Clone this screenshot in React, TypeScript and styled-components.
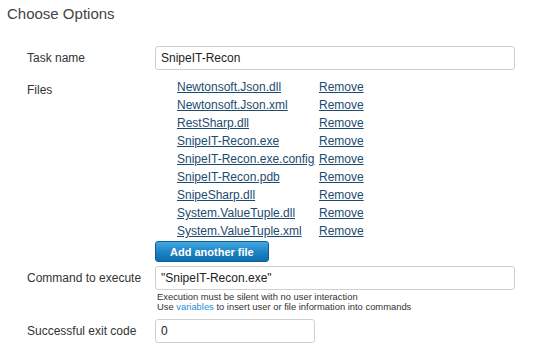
import {Fragment} from 'react';
import styled, {createGlobalStyle} from 'styled-components';

const GlobalStyle = createGlobalStyle`
  body {
    margin: 0;
    background: #fff;
    font-family: "Liberation Sans", Arial, sans-serif;
    color: #333;
  }
`;

const files = [
  'Newtonsoft.Json.dll',
  'Newtonsoft.Json.xml',
  'RestSharp.dll',
  'SnipeIT-Recon.exe',
  'SnipeIT-Recon.exe.config',
  'SnipeIT-Recon.pdb',
  'SnipeSharp.dll',
  'System.ValueTuple.dll',
  'System.ValueTuple.xml',
];

const Page = styled.div`
  width: 539px;
  height: 351px;
  padding: 4px 7px 0;
  box-sizing: border-box;
  overflow: hidden;
`;

const Title = styled.h2`
  margin: 0;
  font-size: 15px;
  font-weight: 400;
  line-height: 20px;
  color: #444;
`;

const Form = styled.div`
  margin: 22px 0 0 20px;
  display: flex;
  flex-direction: column;
`;

const Row = styled.div<{ gap?: number }>`
  display: grid;
  grid-template-columns: 128px 360px;
  margin-top: ${({ gap }) => gap ?? 0}px;
`;

const Label = styled.div<{ offset?: number }>`
  font-size: 12px;
  line-height: 24px;
  padding-top: ${({ offset }) => offset ?? 0}px;
  color: #333;
`;

const Field = styled.div`
  display: flex;
  flex-direction: column;
  align-items: flex-start;
`;

const Input = styled.input<{ narrow?: boolean }>`
  width: ${({ narrow }) => narrow ? '160px' : '360px'};
  height: 24px;
  box-sizing: border-box;
  border: 1px solid #d0d0d0;
  border-radius: 3px;
  padding: 0 5px;
  font-family: inherit;
  font-size: 12px;
  color: #222;
  outline: none;
`;

const FileList = styled.div`
  display: grid;
  grid-template-columns: 142px auto;
  margin-left: 22px;
`;

const FileLink = styled.a`
  font-size: 12px;
  line-height: 18px;
  color: #1d4b70;
  text-decoration: underline;
  white-space: nowrap;
  cursor: pointer;
`;

const AddButton = styled.button`
  height: 21px;
  padding: 0 14px;
  margin-top: 1px;
  border: 1px solid #0a5f96;
  border-radius: 3px;
  background: linear-gradient(#45a9e0, #1b82c4 55%, #0d6eab);
  color: #fff;
  font-family: inherit;
  font-size: 11px;
  font-weight: 700;
  cursor: pointer;
`;

const Help = styled.div`
  margin: 2px 0 0 2px;
  font-size: 9.4px;
  line-height: 10px;
  color: #333;
`;

const HelpLink = styled.a`
  color: #2a8fd3;
  text-decoration: none;
`;

export default function App() {
  return (
    <Page>
      <GlobalStyle />
      <Title>Choose Options</Title>
      <Form>
        <Row>
          <Label>Task name</Label>
          <Input defaultValue="SnipeIT-Recon" />
        </Row>
        <Row gap={8}>
          <Label offset={-1}>Files</Label>
          <Field>
            <FileList>
              {files.map((f) => (
                <Fragment key={f}>
                  <FileLink>{f}</FileLink>
                  <FileLink>Remove</FileLink>
                </Fragment>
              ))}
            </FileList>
            <AddButton>Add another file</AddButton>
          </Field>
        </Row>
        <Row gap={4}>
          <Label>Command to execute</Label>
          <Field>
            <Input defaultValue={'"SnipeIT-Recon.exe"'} />
            <Help>
              Execution must be silent with no user interaction<br />
              Use <HelpLink>variables</HelpLink> to insert user or file information into commands
            </Help>
          </Field>
        </Row>
        <Row gap={7}>
          <Label>Successful exit code</Label>
          <Input narrow defaultValue="0" />
        </Row>
      </Form>
    </Page>
  );
}
